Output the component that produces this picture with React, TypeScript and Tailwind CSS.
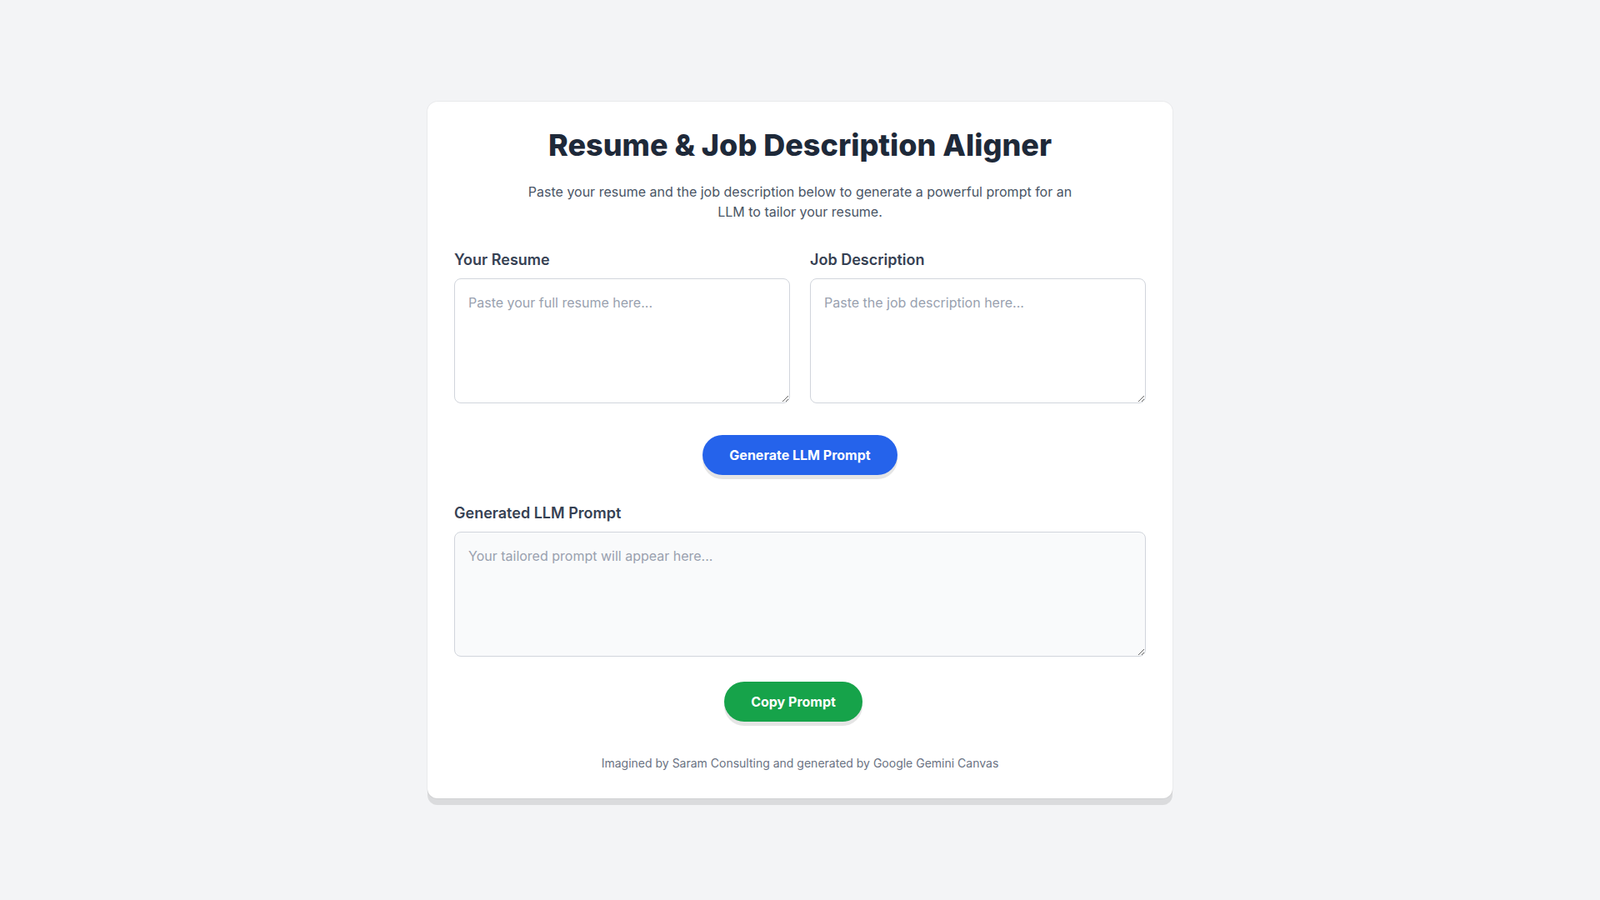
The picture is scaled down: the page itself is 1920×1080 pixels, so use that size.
import { useState } from 'react';

export default function App() {
  const [resume, setResume] = useState('');
  const [job, setJob] = useState('');
  const [prompt, setPrompt] = useState('');
  const [copied, setCopied] = useState(false);

  const generate = () => {
    if (!resume.trim() || !job.trim()) return;
    setPrompt(
      `You are an expert resume writer. Tailor the following resume to the job description.\n\nRESUME:\n${resume}\n\nJOB DESCRIPTION:\n${job}`
    );
  };

  const copy = () => {
    if (!prompt) return;
    navigator.clipboard?.writeText(prompt);
    setCopied(true);
    setTimeout(() => setCopied(false), 2000);
  };

  return (
    <div className="min-h-screen bg-[#f3f4f6] flex items-center justify-center font-['Inter',sans-serif]">
      <div className="w-full max-w-[894px] bg-white rounded-xl p-8 shadow-[0_8px_0_rgba(0,0,0,0.1),0_0_0_1px_rgba(0,0,0,0.04)]">
        <h1 className="text-4xl font-extrabold text-gray-800 text-center mb-6">
          Resume &amp; Job Description Aligner
        </h1>
        <p className="text-base text-gray-600 text-center max-w-2xl mx-auto mb-8">
          Paste your resume and the job description below to generate a powerful prompt for an LLM to tailor your resume.
        </p>

        <div className="grid grid-cols-2 gap-6 mb-[38px]">
          <div>
            <label className="block text-lg font-semibold text-gray-700 mb-2">Your Resume</label>
            <textarea
              value={resume}
              onChange={e => setResume(e.target.value)}
              placeholder="Paste your full resume here..."
              className="block w-full h-[150px] p-4 text-base text-gray-800 border border-gray-300 rounded-lg placeholder:text-gray-400 focus:outline-none focus:ring-2 focus:ring-blue-500"
            />
          </div>
          <div>
            <label className="block text-lg font-semibold text-gray-700 mb-2">Job Description</label>
            <textarea
              value={job}
              onChange={e => setJob(e.target.value)}
              placeholder="Paste the job description here..."
              className="block w-full h-[150px] p-4 text-base text-gray-800 border border-gray-300 rounded-lg placeholder:text-gray-400 focus:outline-none focus:ring-2 focus:ring-blue-500"
            />
          </div>
        </div>

        <div className="flex justify-center mb-8">
          <button
            onClick={generate}
            className="bg-[#2563eb] text-white font-bold text-base px-8 py-3 rounded-full shadow-[0_5px_0_rgba(0,0,0,0.1)] hover:bg-blue-700"
          >
            Generate LLM Prompt
          </button>
        </div>

        <label className="block text-lg font-semibold text-gray-700 mb-2">Generated LLM Prompt</label>
        <textarea
          readOnly
          value={prompt}
          placeholder="Your tailored prompt will appear here..."
          className="block w-full h-[150px] p-4 text-base text-gray-800 bg-gray-50 border border-gray-300 rounded-lg placeholder:text-gray-400 focus:outline-none"
        />

        <div className="flex justify-center items-center gap-4 mt-[30px]">
          <button
            onClick={copy}
            className="bg-[#16a34a] text-white font-bold text-base px-8 py-3 rounded-full shadow-[0_5px_0_rgba(0,0,0,0.1)] hover:bg-green-700"
          >
            Copy Prompt
          </button>
          <span className="text-sm text-green-600">{copied ? 'Copied!' : ''}</span>
        </div>

        <p className="text-sm text-gray-500 text-center mt-10">
          Imagined by Saram Consulting and generated by Google Gemini Canvas
        </p>
      </div>
    </div>
  );
}
